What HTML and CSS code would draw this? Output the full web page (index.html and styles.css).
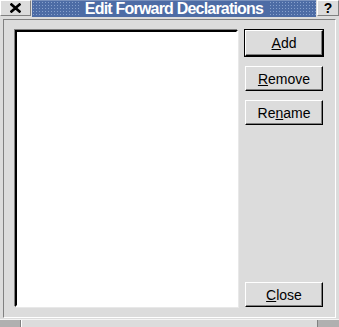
FILE: index.html
```html
<!DOCTYPE html>
<html lang="en">
<head>
    <meta charset="UTF-8">
    <title>Edit Forward Declarations</title>
    <link rel="stylesheet" href="styles.css">
</head>
<body>
    <div class="window">
        <div class="titlebar">
            <div class="tb-btn close-btn">
                <svg width="11" height="10" viewBox="0 0 11 10">
                    <path d="M1.5 1.5 L9.5 8.5 M9.5 1.5 L1.5 8.5" stroke="#000" stroke-width="2.6" stroke-linecap="square"/>
                </svg>
            </div>
            <div class="title"><span>Edit Forward Declarations</span></div>
            <div class="tb-btn help-btn">?</div>
        </div>
        <div class="frame">
            <div class="client">
                <div class="listbox"></div>
                <div class="buttons">
                    <div class="default-wrap"><button class="btn"><u>A</u>dd</button></div>
                    <button class="btn"><u>R</u>emove</button>
                    <button class="btn">Re<u>n</u>ame</button>
                    <button class="btn close"><u>C</u>lose</button>
                </div>
            </div>
        </div>
        <div class="grips">
            <div class="grip"></div>
            <div class="grip-mid"></div>
            <div class="grip right"></div>
        </div>
    </div>
</body>
</html>
```

FILE: styles.css
```css
html,body{
    margin:0px;
    padding:0px;
}
body{
    font-family:"Liberation Sans", Arial, sans-serif;
}
.window{
    width:339px;
    height:327px;
    background-color:#dcdcdc;
    display:flex;
    flex-direction:column;
}
.titlebar{
    height:17px;
    display:flex;
}
.tb-btn{
    box-sizing:border-box;
    height:16px;
    background-color:#dcdcdc;
    border:1px solid;
    border-color:#fff #808080 #808080 #fff;
    display:flex;
    align-items:center;
    justify-content:center;
}
.close-btn{
    width:31px;
    margin-right:1px;
}
.help-btn{
    width:22px;
    margin-left:1px;
    font-weight:bold;
    font-size:14px;
    color:#000;
}
.title{
    flex:1;
    display:flex;
    align-items:center;
    justify-content:center;
    background:conic-gradient(from 270deg at 1px 1px, #86a0cc 90deg, #4d6ca5 0) 1px 1px/3px 3px, #4d6ca5;
    border-top:1px solid #7890bc;
    box-sizing:border-box;
}
.title>span{
    background-color:#4d6ca5;
    color:#fff;
    font-weight:bold;
    font-size:16px;
    letter-spacing:-0.8px;
    line-height:16px;
    padding:0 5px;
}
.frame{
    height:302px;
    box-sizing:border-box;
    padding:2px 3px 1px 3px;
}
.client{
    height:100%;
    box-sizing:border-box;
    border:1px solid;
    border-color:#808080 #fff #fff #808080;
    padding:10px 11px 10px 11px;
    display:flex;
    gap:6px;
}
.listbox{
    width:223px;
    box-sizing:border-box;
    background-color:#fff;
    border:2px solid;
    border-color:#000 #fff #fff #000;
    box-shadow:-1px -1px 0 #808080, 1px 1px 0 #e8e8e8;
}
.buttons{
    width:80px;
    margin-top:-1px;
    display:flex;
    flex-direction:column;
    align-items:center;
    gap:9px;
}
.default-wrap{
    border:1px solid #000;
    height:26px;
    width:78px;
}
.btn{
    box-sizing:border-box;
    width:78px;
    height:25px;
    margin:0;
    padding:0;
    background-color:#dcdcdc;
    border:1px solid;
    border-color:#fff #000 #000 #fff;
    box-shadow:inset -1px -1px 0 #808080;
    font-family:"Liberation Sans", Arial, sans-serif;
    font-size:14px;
    color:#000;
}
.default-wrap>.btn{
    height:26px;
}
.btn.close{
    margin-top:auto;
}
.grips{
    flex:1;
    display:flex;
    border-top:1px solid #f4f4f4;
}
.grip{
    width:20px;
    background-color:#b0b0b0;
    border-right:1px solid #808080;
}
.grip.right{
    width:21px;
    border-right:0;
    border-left:1px solid #808080;
}
.grip-mid{
    flex:1;
    border-left:1px solid #fff;
}
```
